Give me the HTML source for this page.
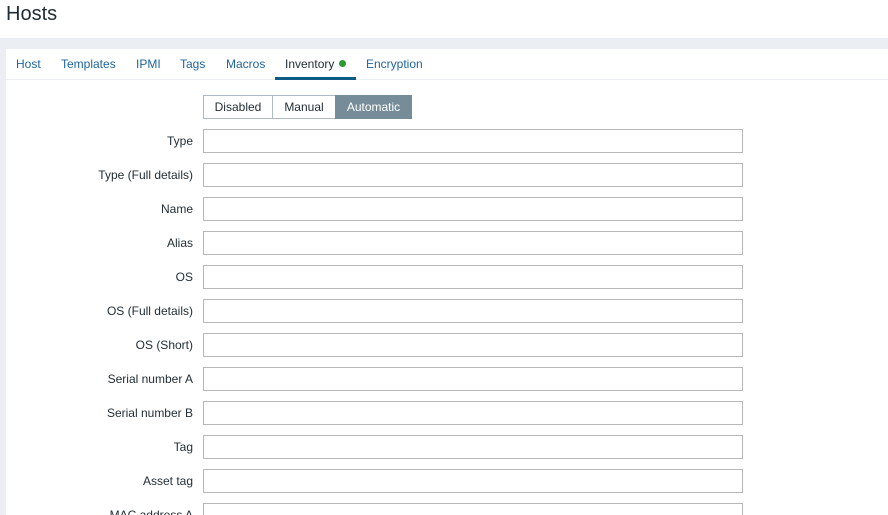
<!DOCTYPE html>
<html style="width:888px;height:515px;overflow:hidden"><head><style>
*{box-sizing:border-box;margin:0;padding:0}
body{width:888px;height:515px;overflow:hidden;background:#fff;font-family:"Liberation Sans",Arial,sans-serif;font-size:12px;color:#1f2c33;position:relative}
h1{position:absolute;left:6px;top:3px;font-size:20px;font-weight:normal;color:#1f2c33}
.band{position:absolute;left:0;top:38px;width:888px;height:11px;background:#ebeef2}
.lstrip{position:absolute;left:0;top:38px;width:6px;height:477px;background:#ebeef2}
.panel{position:absolute;left:6px;top:49px;width:882px;height:466px;background:#fff}
.tabs{position:absolute;left:6px;top:49px;width:882px;height:31px;border-bottom:1px solid #ebeef2}
.tab{position:absolute;top:8px;color:#1f65a0;font-size:12px}
.ul{position:absolute;left:275px;top:77px;width:81px;height:3px;background:#0b5b85}
.dot{display:inline-block;width:7px;height:7px;border-radius:50%;background:#2b9a32;margin-left:5px;vertical-align:1px}
.seg{position:absolute;top:95px;height:24px;border:1px solid #acbbc4;line-height:22px;text-align:center;background:#fff}
.lbl{position:absolute;right:695px;text-align:right;white-space:nowrap}
.inp{position:absolute;left:203px;width:540px;height:24px;border:1px solid #b8b8b8;background:#fff}
</style></head><body>
<h1>Hosts</h1>
<div class="band"></div><div class="lstrip"></div><div class="panel"></div>
<div class="tabs"></div>
<span class="tab" style="left:16px;top:57px">Host</span>
<span class="tab" style="left:61px;top:57px">Templates</span>
<span class="tab" style="left:136px;top:57px">IPMI</span>
<span class="tab" style="left:180px;top:57px">Tags</span>
<span class="tab" style="left:226px;top:57px">Macros</span>
<span class="tab" style="left:285px;top:57px;color:#1f2c33">Inventory<span class="dot"></span></span>
<span class="tab" style="left:366px;top:57px">Encryption</span>
<div class="ul"></div>
<div class="seg" style="left:203px;width:70px">Disabled</div>
<div class="seg" style="left:272px;width:64px">Manual</div>
<div class="seg" style="left:335px;width:77px;background:#768d99;border-color:#768d99;color:#fff">Automatic</div>
<div class="lbl" style="top:134px">Type</div><div class="inp" style="top:129px"></div>
<div class="lbl" style="top:168px">Type (Full details)</div><div class="inp" style="top:163px"></div>
<div class="lbl" style="top:202px">Name</div><div class="inp" style="top:197px"></div>
<div class="lbl" style="top:236px">Alias</div><div class="inp" style="top:231px"></div>
<div class="lbl" style="top:270px">OS</div><div class="inp" style="top:265px"></div>
<div class="lbl" style="top:304px">OS (Full details)</div><div class="inp" style="top:299px"></div>
<div class="lbl" style="top:338px">OS (Short)</div><div class="inp" style="top:333px"></div>
<div class="lbl" style="top:372px">Serial number A</div><div class="inp" style="top:367px"></div>
<div class="lbl" style="top:406px">Serial number B</div><div class="inp" style="top:401px"></div>
<div class="lbl" style="top:440px">Tag</div><div class="inp" style="top:435px"></div>
<div class="lbl" style="top:474px">Asset tag</div><div class="inp" style="top:469px"></div>
<div class="lbl" style="top:508px">MAC address A</div><div class="inp" style="top:503px"></div>
</body></html>
